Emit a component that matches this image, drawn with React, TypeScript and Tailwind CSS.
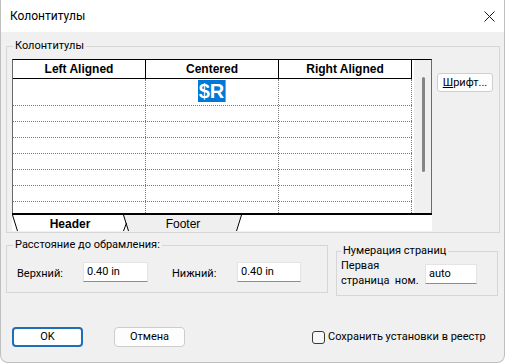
const ui = "font-['Roboto','Noto_Sans',sans-serif]";
const arial = "font-['Liberation_Sans',Arial,sans-serif]";

function TextBox({ value, width }: { value: string; width: string }) {
  return (
    <div
      className={`${width} h-[20px] bg-white border border-[#e4e4e4] border-b-[#8c8c8c] pl-[3px] text-[11px] leading-[18px] text-black`}
    >
      {value}
    </div>
  );
}

function Grid() {
  const rows = [16, 16, 16, 16, 16, 16];
  return (
    <div className="w-[420px] bg-white">
      <div className="flex h-[154px] border-x border-t border-[#6a6a6a] border-t-black">
        <div className="w-[399px] flex flex-col overflow-hidden">
          {/* column titles */}
          <div className={`flex h-[19px] border-b border-black ${arial} text-[12px] font-bold`}>
            {['Left Aligned', 'Centered', 'Right Aligned'].map((t) => (
              <div key={t} className="w-[133px] border-r border-black flex items-center justify-center">
                {t}
              </div>
            ))}
          </div>
          {/* first row with the selected cell */}
          <div className="flex h-[27px] border-b border-dotted border-[#7a7a7a]">
            <div className="w-[133px] border-r border-dotted border-[#7a7a7a]" />
            <div className="w-[133px] border-r border-dotted border-[#7a7a7a] flex justify-center pt-[1px]">
              <span
                className={`${arial} h-[22px] px-[1px] bg-[#0078d7] text-white text-[20px] font-bold leading-[22px] border-r border-[#e8902c]`}
              >
                $R
              </span>
            </div>
            <div className="w-[133px] border-r border-dotted border-[#7a7a7a]" />
          </div>
          {rows.map((h, i) => (
            <div key={i} className="flex h-[16px] shrink-0 border-b border-dotted border-[#7a7a7a]">
              <div className="w-[133px] border-r border-dotted border-[#7a7a7a]" />
              <div className="w-[133px] border-r border-dotted border-[#7a7a7a]" />
              <div className="w-[133px] border-r border-dotted border-[#7a7a7a]" />
            </div>
          ))}
          <div className="flex flex-1">
            <div className="w-[133px] border-r border-dotted border-[#7a7a7a]" />
            <div className="w-[133px] border-r border-dotted border-[#7a7a7a]" />
            <div className="w-[133px] border-r border-dotted border-[#7a7a7a]" />
          </div>
        </div>
        {/* scrollbar */}
        <div className="w-[19px] bg-[#f0f0f0] border-l-2 border-white">
          <div className="ml-[8px] mt-[17px] h-[95px] w-[3px] rounded-full bg-[#858585]" />
        </div>
      </div>
      <div className="h-[2px] bg-black" />
      {/* sheet tabs */}
      <svg width="420" height="16" className="block" style={{ fontFamily: '"Liberation Sans", Arial, sans-serif' }}>
        <polygon points="111,0 229,0 224,16 116,16" fill="#efefef" />
        <line x1="0.5" y1="0" x2="5.5" y2="16" stroke="#000" />
        <line x1="111.5" y1="0" x2="116.5" y2="16" stroke="#000" />
        <line x1="114.5" y1="8" x2="111.5" y2="16" stroke="#000" />
        <line x1="229.5" y1="0" x2="224.5" y2="16" stroke="#000" />
        <text x="58" y="12.5" textAnchor="middle" fontSize="12" fontWeight="bold" fill="#000">
          Header
        </text>
        <text x="171" y="12.5" textAnchor="middle" fontSize="12" fill="#000">
          Footer
        </text>
      </svg>
    </div>
  );
}

export default function App() {
  return (
    <div className={`min-h-screen bg-white ${ui} text-black`}>
      <div className="w-[505px] h-[363px] flex flex-col border-x border-b border-[#bfbfbf] rounded-b-[8px] bg-[#f0f0f0] overflow-hidden">
        {/* title bar */}
        <div className="h-[32px] shrink-0 bg-white flex items-center justify-between pl-[9px] pr-[8px]">
          <span className="text-[12px]">Колонтитулы</span>
          <svg width="11" height="11" viewBox="0 0 11 11" className="mr-[1px]">
            <path d="M0.5 0.5 L10.5 10.5 M10.5 0.5 L0.5 10.5" stroke="#1a1a1a" strokeWidth="1" />
          </svg>
        </div>

        <div className="flex flex-col px-[5px] text-[11px]">
          {/* main group */}
          <fieldset className="mt-[7px] w-[494px] border border-[#d6d6d6] pl-[5px] pt-[6px] pb-[1px]">
            <legend className="ml-[1px] px-[2px] leading-[14px]">Колонтитулы</legend>
            <div className="flex">
              <Grid />
              <button className="ml-[5px] mt-[14px] w-[56px] h-[19px] rounded-[3px] border border-[#cfcfcf] bg-[#fdfdfd] text-[11px] leading-[17px]">
                <span className="underline">Ш</span>рифт...
              </button>
            </div>
          </fieldset>

          <div className="flex items-start mt-[5px]">
            <fieldset className="w-[322px] border border-[#d6d6d6] px-[6px] pt-[10px] pb-[10px]">
              <legend className="px-[2px] leading-[14px]">Расстояние до обрамления:</legend>
              <div className="flex items-start pl-[4px]">
                <span className="w-[66px] pt-[5px] leading-[14px]">Верхний:</span>
                <TextBox value="0.40 in" width="w-[65px]" />
                <span className="ml-[24px] w-[65px] pt-[5px] leading-[14px]">Нижний:</span>
                <TextBox value="0.40 in" width="w-[64px]" />
              </div>
            </fieldset>

            <fieldset className="ml-[8px] mt-[6px] w-[162px] border border-[#d6d6d6] px-[4px] pb-[7px]">
              <legend className="px-[2px] leading-[14px]">Нумерация страниц</legend>
              <div className="flex items-start">
                <div className="w-[84px] leading-[15px]">
                  Первая
                  <br />
                  страница&nbsp; ном.
                </div>
                <div className="mt-[6px]">
                  <TextBox value="auto" width="w-[52px]" />
                </div>
              </div>
            </fieldset>
          </div>

          {/* buttons row */}
          <div className="flex items-center mt-[31px] pl-[6px]">
            <button className="w-[71px] h-[20px] rounded-[4px] border-2 border-[#1f6fb8] bg-white text-[11px]">
              OK
            </button>
            <button className="ml-[31px] w-[71px] h-[20px] rounded-[4px] border border-[#cccccc] bg-[#fdfdfd] text-[11px]">
              Отмена
            </button>
            <label className="ml-[127px] flex items-center gap-[3px]">
              <span className="w-[13px] h-[13px] rounded-[3px] border border-[#3a3a3a] bg-[#f7f7f7]" />
              <span>Сохранить установки в реестр</span>
            </label>
          </div>
        </div>
      </div>
    </div>
  );
}
